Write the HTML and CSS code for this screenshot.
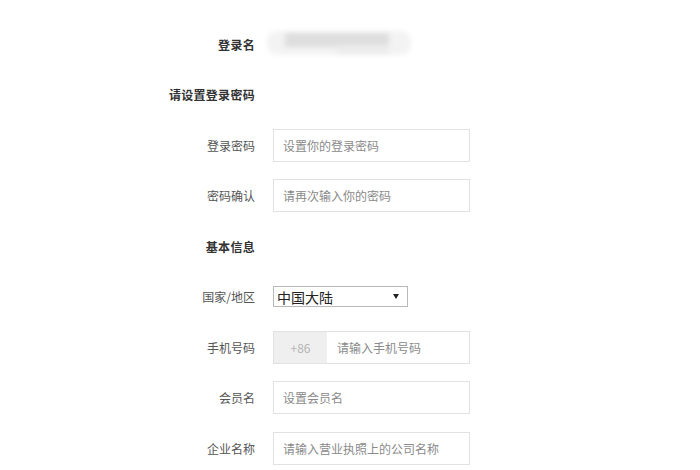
FILE: index.html
```html
<!DOCTYPE html>
<html lang="zh">
<head>
<meta charset="utf-8">
<title>注册</title>
<link rel="stylesheet" href="styles.css">
</head>
<body>
<form class="form">
  <div class="label strong">登录名</div>
  <div class="field"><div class="blurred"><span class="blur-a"></span><span class="blur-b"></span><span class="blur-c"></span></div></div>

  <div class="label strong">请设置登录密码</div>
  <div class="field"></div>

  <div class="label">登录密码</div>
  <div class="field"><div class="input"><span class="ph">设置你的登录密码</span></div></div>

  <div class="label">密码确认</div>
  <div class="field"><div class="input"><span class="ph">请再次输入你的密码</span></div></div>

  <div class="label strong">基本信息</div>
  <div class="field"></div>

  <div class="label">国家/地区</div>
  <div class="field"><div class="select"><span class="sel-text">中国大陆</span><span class="arrow"></span></div></div>

  <div class="label">手机号码</div>
  <div class="field"><div class="input phone"><span class="prefix">+86</span><span class="ph">请输入手机号码</span></div></div>

  <div class="label">会员名</div>
  <div class="field"><div class="input"><span class="ph">设置会员名</span></div></div>

  <div class="label">企业名称</div>
  <div class="field"><div class="input"><span class="ph">请输入营业执照上的公司名称</span></div></div>
</form>
</body>
</html>
```
FILE: styles.css
```css
html, body {
  margin: 0;
  padding: 0;
  background: #ffffff;
}
body {
  font-family: "Noto Sans CJK SC", "Liberation Sans", sans-serif;
  font-size: 12px;
  color: #555;
}
.form {
  display: grid;
  grid-template-columns: 105px 197px;
  column-gap: 18px;
  grid-auto-rows: 33px;
  row-gap: 17.5px;
  margin: 27.5px 0 0 150px;
}
.label {
  display: flex;
  align-items: center;
  justify-content: flex-end;
  white-space: nowrap;
  color: #555;
}
.label.strong {
  font-weight: bold;
  color: #333;
  letter-spacing: 0.3px;
}
.field {
  display: flex;
  align-items: center;
}
.input {
  box-sizing: border-box;
  width: 197px;
  height: 33px;
  border: 1px solid #e2e2e2;
  display: flex;
  align-items: center;
  padding-left: 9px;
}
.ph {
  color: #8a8a8a;
}
.phone {
  padding-left: 0;
}
.prefix {
  width: 53px;
  height: 100%;
  background: #efefef;
  color: #b5b5b5;
  display: flex;
  align-items: center;
  justify-content: center;
  margin-right: 10px;
}
.select {
  box-sizing: border-box;
  width: 135px;
  height: 21px;
  border: 1px solid #b9b9b9;
  display: flex;
  align-items: center;
  justify-content: space-between;
  padding: 0 8px 0 3px;
}
.sel-text {
  font-size: 14px;
  color: #222;
}
.arrow {
  width: 0;
  height: 0;
  border-left: 3px solid transparent;
  border-right: 3px solid transparent;
  border-top: 5px solid #222;
}
.blurred {
  position: relative;
  width: 148px;
  height: 30px;
  margin-left: -8px;
  filter: blur(2.5px);
}
.blur-a {
  position: absolute;
  left: 2px;
  top: 2px;
  width: 144px;
  height: 24px;
  background: #f3f3f3;
  border-radius: 10px;
}
.blur-b {
  position: absolute;
  left: 20px;
  top: 4px;
  width: 104px;
  height: 14px;
  background: #dedede;
}
.blur-c {
  position: absolute;
  left: 72px;
  top: 16px;
  width: 52px;
  height: 10px;
  background: #ececec;
}
```
